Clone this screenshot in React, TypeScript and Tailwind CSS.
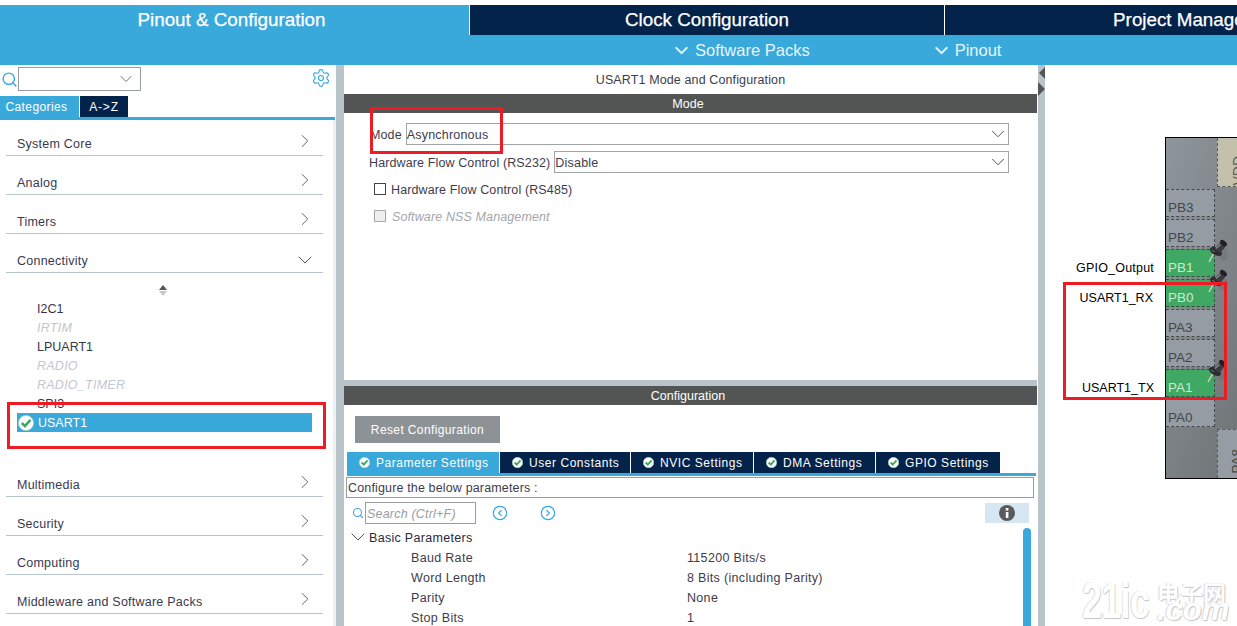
import { ChevronDown, ChevronRight, CircleChevronLeft, CircleChevronRight, Search, Settings } from 'lucide-react';

const groupsTop = ['System Core', 'Analog', 'Timers'];
const groupsBottom = ['Multimedia', 'Security', 'Computing', 'Middleware and Software Packs'];

function CheckBadge({ size }: { size: number }) {
  return (
    <svg width={size} height={size} viewBox="0 0 16 16" className="shrink-0">
      <circle cx="8" cy="8" r="7.6" fill="#ffffff" stroke="#9ed4b0" strokeWidth="0.8" />
      <path d="M3.8 8 L7 11.2 L12.4 4.8" fill="none" stroke="#3fa964" strokeWidth="2.6" />
    </svg>
  );
}

function PushPin({ className }: { className: string }) {
  return (
    <svg width="20" height="25" viewBox="0 0 20 25" className={className}>
      <ellipse cx="15" cy="16" rx="5" ry="6" fill="#5f6366" opacity="0.3" />
      <path d="M1 24 L6 15" stroke="#c9d0c8" strokeWidth="1.5" />
      <ellipse cx="8" cy="13.5" rx="6.5" ry="3.6" transform="rotate(30 8 13.5)" fill="#2a2b2d" />
      <path d="M6 11 L13 4 L18 8 L12 15 Z" fill="#3a3b3e" />
      <ellipse cx="15.5" cy="5" rx="4" ry="2.4" transform="rotate(40 15.5 5)" fill="#1f2022" />
      <path d="M8 10.5 L12.5 6.5" stroke="#8d9094" strokeWidth="1.2" />
      <path d="M4 12 L7 14" stroke="#76797c" strokeWidth="1" />
    </svg>
  );
}

function Group({ label, open }: { label: string; open?: boolean }) {
  return (
    <div className="mx-[6px] mb-[3px] flex h-[36px] w-[317px] items-end justify-between border-b border-[#b8c4cc] pb-[3px] pl-[11px] pr-[7px] text-[12.5px] leading-[16px] tracking-[0.24px] text-[#39394f]">
      <span>{label}</span>
      {open ? (
        <ChevronDown size={24} strokeWidth={1} className="-mr-px mb-[-3px] text-[#555]" />
      ) : (
        <ChevronRight size={22} strokeWidth={1} className="text-[#555]" />
      )}
    </div>
  );
}

function Sub({ label, off }: { label: string; off?: boolean }) {
  return (
    <div className={off ? 'h-[19px] pl-[37px] text-[12.5px] italic leading-[21px] tracking-[0.25px] text-[#c3c6cb]' : 'h-[19px] pl-[37px] text-[12.5px] leading-[21px] text-[#36364a]'}>
      {label}
    </div>
  );
}

function ConfigTab({ label, active, w }: { label: string; active?: boolean; w: string }) {
  return (
    <div className={`flex h-[21px] items-center gap-[6px] pl-[12px] text-[12px] tracking-[0.55px] text-white ${w} ${active ? 'bg-[#39a9dc]' : 'bg-[#03234b]'}`}>
      <CheckBadge size={11} />
      <span className="whitespace-nowrap">{label}</span>
    </div>
  );
}

function Param({ label, value }: { label: string; value: string }) {
  return (
    <div className="flex h-[20px] items-center text-[12.5px] leading-[16px] tracking-[0.32px] text-[#3e3c4c]">
      <span className="mt-px w-[343px] pl-[67px]">{label}</span>
      <span className="mt-px">{value}</span>
    </div>
  );
}

function PinTile({ label, green }: { label: string; green?: boolean }) {
  return (
    <div className={`flex h-[28px] w-[49px] items-center border-y border-r border-dashed border-[#45484a] pl-[2px] pt-[11px] text-[13.5px] ${green ? 'bg-[#3fa964] text-[#c6ecd0]' : 'bg-[#969ca3] text-[#43474b]'}`}>
      {label}
    </div>
  );
}

export default function App() {
  return (
    <div className="relative flex h-screen w-full flex-col overflow-hidden bg-white pt-[5px] font-['Liberation_Sans',sans-serif]">
      {/* top bar */}
      <div className="flex h-[30px] shrink-0 bg-[#39a9dc] text-[18.8px] text-white [-webkit-text-stroke:0.25px_white]">
        <div className="flex w-[469px] shrink-0 items-center justify-center bg-[#39a9dc] pr-[6px] pt-px">Pinout &amp; Configuration</div>
        <div className="flex w-[475px] shrink-0 items-center justify-center border-l border-white bg-[#03234b] pt-px">Clock Configuration</div>
        <div className="flex w-[475px] shrink-0 items-center justify-center border-l border-white bg-[#03234b] pt-px">Project Manager</div>
      </div>
      <div className="flex h-[30px] shrink-0 items-center bg-[#39a9dc] pl-[671px] text-[16.5px] text-[#e6f4fb]">
        <ChevronDown size={21} strokeWidth={2.4} />
        <span className="ml-[3px]">Software Packs</span>
        <ChevronDown size={21} strokeWidth={2.4} className="ml-[121px]" />
        <span className="ml-[3px]">Pinout</span>
      </div>

      <div className="flex min-h-0 flex-1">
        {/* left panel */}
        <div className="relative w-[336px] shrink-0">
          <div className="absolute bottom-0 right-0 top-[55px] w-[3px] bg-[#eef1f3]" />
          <div className="flex h-[31px] items-start pt-[2px]">
            <Search size={17} strokeWidth={2} className="ml-px mt-[4px] text-[#39a9dc]" />
            <div className="flex h-[24px] w-[123px] items-center justify-end border border-[#9a9da0] pr-[4px]">
              <ChevronDown size={20} strokeWidth={1} className="text-[#555]" />
            </div>
            <Settings size={20} strokeWidth={1.4} className="ml-[170px] mt-px text-[#39a9dc]" />
          </div>
          <div className="flex h-[21px] text-[12px] tracking-[0.4px] text-white">
            <div className="flex w-[79px] items-center justify-center bg-[#39a9dc] pr-[6px]">Categories</div>
            <div className="ml-px flex w-[48px] items-center justify-center bg-[#03234b] tracking-[0.8px]">A-&gt;Z</div>
          </div>
          <div className="h-[3px] w-[335px] bg-[#39a9dc]" />
          {groupsTop.map((g) => (
            <Group key={g} label={g} />
          ))}
          <Group label="Connectivity" open />
          <div className="h-[185px]">
            <div className="flex h-[23px] w-[326px] flex-col items-center pt-[9px]">
              <div className="h-0 w-0 border-x-[4px] border-b-[5px] border-x-transparent border-b-[#555]" />
              <div className="mt-px h-0 w-0 border-x-[4px] border-t-[5px] border-x-transparent border-t-[#c4c8cc]" />
            </div>
            <Sub label="I2C1" />
            <Sub label="IRTIM" off />
            <Sub label="LPUART1" />
            <Sub label="RADIO" off />
            <Sub label="RADIO_TIMER" off />
            <Sub label="SPI3" />
            <div className="ml-[17px] flex h-[19px] w-[295px] items-center gap-[4px] bg-[#39a9dc] pl-px text-[12.5px] text-white">
              <CheckBadge size={16} />
              <span className="mt-px">USART1</span>
            </div>
          </div>
          {groupsBottom.map((g) => (
            <Group key={g} label={g} />
          ))}
        </div>
        <div className="w-[8px] shrink-0 bg-[#b9c4ca]" />

        {/* center panel */}
        <div className="flex w-[693px] shrink-0 flex-col">
          <div className="h-[315px] shrink-0 text-[12.5px] tracking-[0.12px] text-[#3e3c4c]">
            <div className="flex h-[29px] items-center justify-center pt-[2px]">USART1 Mode and Configuration</div>
            <div className="flex h-[19px] items-center justify-center bg-[#535554] pr-[5px] pt-[2px] text-white">Mode</div>
            <div className="mt-[10px] flex h-[22px] items-center pl-[26px]">
              <span className="mt-[2px]">Mode</span>
              <div className="ml-[4px] flex h-[22px] w-[603px] items-center justify-between border border-[#a2a5a8]">
                <span className="mt-[2px] tracking-[0.2px]">Asynchronous</span>
                <ChevronDown size={22} strokeWidth={1} className="-mr-px text-[#444]" />
              </div>
            </div>
            <div className="mt-[6px] flex h-[22px] items-center pl-[25px]">
              <span className="mt-[2px] whitespace-nowrap">Hardware Flow Control (RS232)</span>
              <div className="ml-[4px] flex h-[22px] w-[455px] items-center justify-between border border-[#a2a5a8]">
                <span className="mt-[2px] tracking-[0.2px]">Disable</span>
                <ChevronDown size={22} strokeWidth={1} className="-mr-px text-[#444]" />
              </div>
            </div>
            <div className="mt-[5px] flex h-[22px] items-center pl-[30px]">
              <div className="h-[12px] w-[12px] border border-[#444] bg-white" />
              <span className="ml-[5px] mt-[2px]">Hardware Flow Control (RS485)</span>
            </div>
            <div className="mt-[5px] flex h-[22px] items-center pl-[30px] text-[#a3a6ab]">
              <div className="h-[12px] w-[12px] border border-[#a8abae] bg-[#eceef0]" />
              <span className="ml-[6px] mt-[2px] italic">Software NSS Management</span>
            </div>
          </div>
          <div className="h-[6px] shrink-0 bg-[#b9c4ca]" />
          <div className="flex h-[19px] shrink-0 items-center justify-center bg-[#535554] pr-[5px] pt-[2px] text-[12.5px] text-white">Configuration</div>
          <div className="relative min-h-0 flex-1 overflow-hidden">
            <div className="ml-[11px] mt-[11px] flex h-[27px] w-[145px] items-center justify-center bg-[#8d9297] text-[12px] tracking-[0.38px] text-white">
              Reset Configuration
            </div>
            <div className="ml-[3px] mt-[9px] flex gap-px">
              <ConfigTab label="Parameter Settings" w="w-[152px]" active />
              <ConfigTab label="User Constants" w="w-[130px]" />
              <ConfigTab label="NVIC Settings" w="w-[122px]" />
              <ConfigTab label="DMA Settings" w="w-[121px]" />
              <ConfigTab label="GPIO Settings" w="w-[124px]" />
            </div>
            <div className="ml-[3px] h-[3px] w-[689px] bg-[#39a9dc]" />
            <div className="ml-[2px] mt-px flex h-[21px] w-[688px] items-center border border-[#9a9da0] pl-px pt-[2px] text-[12.5px] tracking-[0.15px] text-[#3e3c4c]">
              Configure the below parameters :
            </div>
            <div className="mt-[4px] flex h-[22px] items-center pl-[8px]">
              <Search size={12} strokeWidth={2.2} className="text-[#39a9dc]" />
              <div className="ml-px flex h-[22px] w-[111px] items-center border border-[#9a9da0] pl-px pt-[2px] text-[12.5px] italic tracking-[0.2px] text-[#9a9da0]">
                Search (Ctrl+F)
              </div>
              <CircleChevronLeft size={16} strokeWidth={1.8} className="ml-[16px] text-[#39a9dc]" />
              <CircleChevronRight size={16} strokeWidth={1.8} className="ml-[32px] text-[#39a9dc]" />
              <div className="ml-[429px] flex h-[20px] w-[44px] items-center justify-center bg-[#d7e6f3]">
                <svg width="16" height="16" viewBox="0 0 16 16">
                  <circle cx="8" cy="8" r="8" fill="#5a5a5a" />
                  <rect x="6.8" y="7" width="2.6" height="6" fill="#fff" />
                  <rect x="6.8" y="3" width="2.6" height="2.6" fill="#fff" />
                </svg>
              </div>
            </div>
            <div className="mt-[3px] flex h-[20px] items-center pl-[2px] text-[12.5px] leading-[16px] tracking-[0.3px] text-[#2a2a3a]">
              <ChevronDown size={24} strokeWidth={1} className="shrink-0 text-[#555]" />
              <span className="-ml-px mt-px">Basic Parameters</span>
            </div>
            <Param label="Baud Rate" value="115200 Bits/s" />
            <Param label="Word Length" value="8 Bits (including Parity)" />
            <Param label="Parity" value="None" />
            <Param label="Stop Bits" value="1" />
            <div className="absolute left-[679px] top-[123px] h-[120px] w-[8px] rounded-t-[4px] bg-[#39a9dc]" />
          </div>
        </div>
        <div className="relative ml-px w-[7px] shrink-0 bg-[#b9c4ca]">
          <div className="absolute left-px top-[2px] h-0 w-0 border-y-[6px] border-r-[6px] border-y-transparent border-r-[#555]" />
          <div className="absolute left-0 top-[17px] h-0 w-0 border-y-[7px] border-l-[7px] border-y-transparent border-l-[#555]" />
        </div>

        {/* pinout canvas */}
        <div className="relative min-w-0 flex-1 overflow-hidden text-[12.5px] text-black">
          <span className="absolute right-[83px] top-[195px] leading-[16px] tracking-[0.2px]">GPIO_Output</span>
          <span className="absolute right-[84px] top-[225px] leading-[16px]">USART1_RX</span>
          <span className="absolute right-[83px] top-[315px] leading-[16px]">USART1_TX</span>
          <div className="absolute left-[120px] top-[72px] h-[342px] w-[120px] border-y border-l border-black bg-gradient-to-br from-[#8f969b] to-[#676b6d]">
            <div className="absolute left-[51px] top-0 flex h-[49px] w-[40px] items-end border-x border-b border-dashed border-[#55585a] bg-[#c3c1ab] pl-[13px]">
              <span className="rotate-180 text-[14px] leading-[14px] text-[#5f5f55] [writing-mode:vertical-rl]">VDD</span>
            </div>
            <div className="absolute bottom-0 left-[51px] flex h-[49px] w-[40px] items-end border-x border-t border-dashed border-[#55585a] bg-[#969ca3] pb-[4px] pl-[12px]">
              <span className="rotate-180 text-[13.5px] leading-[14px] text-[#43474b] [writing-mode:vertical-rl]">PA8</span>
            </div>
            <div className="absolute left-0 top-[51px] flex flex-col gap-[2px]">
              <PinTile label="PB3" />
              <PinTile label="PB2" />
              <PinTile label="PB1" green />
              <PinTile label="PB0" green />
              <PinTile label="PA3" />
              <PinTile label="PA2" />
              <PinTile label="PA1" green />
              <PinTile label="PA0" />
            </div>
            <PushPin className="absolute left-[42px] top-[100px]" />
            <PushPin className="absolute left-[42px] top-[130px]" />
            <PushPin className="absolute left-[41px] top-[220px]" />
          </div>
          {/* watermark */}
          <div className="absolute left-[37px] top-[511px] origin-left scale-x-[0.72] whitespace-nowrap text-[50px] font-bold leading-[50px] tracking-[-1px] text-white [text-shadow:1px_1px_1px_#c4c4c4,-1px_0_1px_#d8d8d8]">21ic</div>
          <div className="absolute left-[112px] top-[514px] whitespace-nowrap font-['Noto_Sans_CJK_SC',sans-serif] text-[23px] font-bold leading-[26px] text-white [text-shadow:1px_1px_1px_#c4c4c4,-1px_0_1px_#d8d8d8]">电子网</div>
          <div className="absolute left-[112px] top-[533px] whitespace-nowrap text-[31px] font-bold italic leading-[24px] text-white [text-shadow:1px_1px_1px_#c4c4c4,-1px_0_1px_#d8d8d8]">.com</div>
        </div>
      </div>

      {/* red annotation boxes */}
      <div className="absolute left-[370px] top-[107px] h-[47px] w-[133px] border-[3px] border-[#ed1c24]" />
      <div className="absolute left-[7px] top-[402px] h-[47px] w-[319px] border-[3px] border-[#ed1c24]" />
      <div className="absolute left-[1063px] top-[282px] h-[118px] w-[164px] border-[3px] border-[#ed1c24]" />
    </div>
  );
}
